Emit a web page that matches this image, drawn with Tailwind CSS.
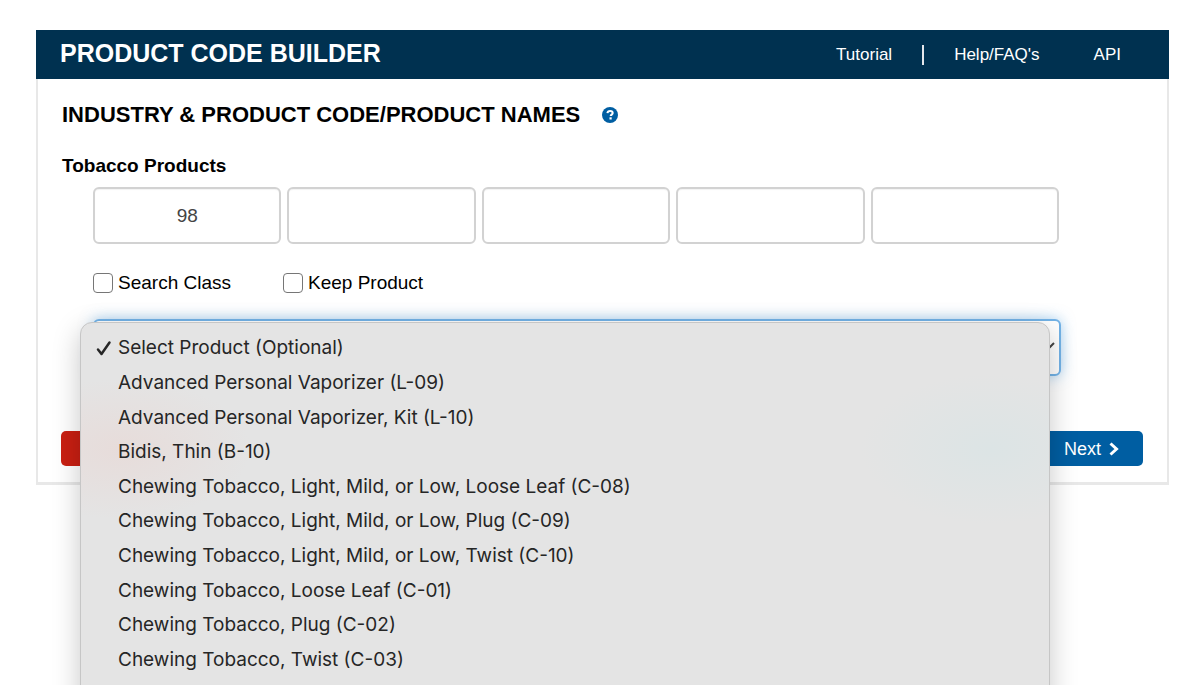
<!DOCTYPE html>
<html lang="en">

<head>
  <meta charset="UTF-8" />
  <meta name="viewport" content="width=device-width, initial-scale=1.0" />
  <title>Product Code Builder</title>
  <script src="https://cdn.jsdelivr.net/npm/@tailwindcss/browser@4"></script>
</head>

<body class="h-screen overflow-hidden bg-white font-['Liberation_Sans',Arial,sans-serif] text-black">
  <div class="ml-9 mr-[31px] pt-[30px]">
    <!-- Header -->
    <header class="flex h-[49px] items-center justify-between bg-[#003150] pl-6 pr-12 text-white">
      <h1 class="pb-1 text-[25px] leading-8 font-bold">PRODUCT CODE BUILDER</h1>
      <nav class="flex items-center text-[17px] leading-6">
        <a href="#tutorial">Tutorial</a>
        <span class="mx-[30px] h-5 w-[2px] bg-gray-200"></span>
        <a href="#help">Help/FAQ's</a>
        <a href="#api" class="ml-[54px]">API</a>
      </nav>
    </header>

    <!-- Builder -->
    <main class="border-x-2 border-b-3 border-[#e8e8e8] px-6 pt-[22px] pb-4">
      <h2 class="flex items-center text-[22px] leading-7 font-bold">
        INDUSTRY &amp; PRODUCT CODE/PRODUCT NAMES
        <button type="button" aria-label="Help" class="ml-[22px]">
          <svg class="size-4" viewBox="0 0 16 16">
            <circle cx="8" cy="8" r="8" fill="#005ea2" />
            <path d="M5.400 6.200c.2-1.600 1.300-2.300 2.700-2.300 1.400 0 2.600.8 2.600 2.100 0 1.600-2 1.600-2 3.100" fill="none" stroke="#fff" stroke-width="2" />
            <rect x="7.500" y="10.300" width="2.200" height="2.200" fill="#fff" />
          </svg>
        </button>
      </h2>

      <form>
        <fieldset>
          <legend class="pt-[25px] text-[19px] leading-6 font-bold">Tobacco Products</legend>
          <div class="mt-[9px] grid grid-cols-5 gap-[6px] pl-[31px] pr-[84px]">
            <input type="text" aria-label="Industry" value="98" class="h-[57px] min-w-0 rounded-md border-2 border-[#d2d2d2] text-center text-[19px] text-[#444] inset-shadow-xs" />
            <input type="text" aria-label="Class" class="h-[57px] min-w-0 rounded-md border-2 border-[#d2d2d2] text-center text-[19px] text-[#444] inset-shadow-xs" />
            <input type="text" aria-label="Subclass" class="h-[57px] min-w-0 rounded-md border-2 border-[#d2d2d2] text-center text-[19px] text-[#444] inset-shadow-xs" />
            <input type="text" aria-label="PIC" class="h-[57px] min-w-0 rounded-md border-2 border-[#d2d2d2] text-center text-[19px] text-[#444] inset-shadow-xs" />
            <input type="text" aria-label="Product" class="h-[57px] min-w-0 rounded-md border-2 border-[#d2d2d2] text-center text-[19px] text-[#444] inset-shadow-xs" />
          </div>
        </fieldset>

        <div class="mt-[27px] flex gap-[52px] pl-[31px] text-[19px] leading-6">
          <label class="flex items-center gap-[5px]">
            <input type="checkbox" class="size-5 appearance-none rounded-[4px] border border-[#767676] bg-white" />
            Search Class
          </label>
          <label class="flex items-center gap-[5px]">
            <input type="checkbox" class="size-5 appearance-none rounded-[4px] border border-[#767676] bg-white" />
            Keep Product
          </label>
        </div>

        <!-- Product select, open -->
        <div class="relative mt-6 ml-[31px] mr-[82px]">
          <select aria-label="Product name" class="block h-[57px] w-full appearance-none rounded-md border-2 border-[#73b3e7] bg-white px-3 text-[19px] shadow-[0_0_14px_rgba(82,168,236,0.5)]">
            <option>Select Product (Optional)</option>
          </select>
          <svg class="absolute top-[22px] right-[6px] h-3 w-4" viewBox="0 0 16 12" fill="none" stroke="#444" stroke-width="2">
            <path d="M1 2l7 7 7-7" />
          </svg>
          <ul role="listbox" aria-label="Products" class="absolute top-[3px] right-[11px] -left-[13px] z-10 grid h-[412px] auto-rows-[1fr] rounded-xl border border-[#c6c6c6] bg-[#e4e4e4] bg-[radial-gradient(130px_70px_at_40px_126px,#e7dcda,transparent),radial-gradient(130px_75px_at_910px_126px,#dce4e5,transparent)] pt-2 pb-[21px] pl-[37px] font-[Inter,sans-serif] text-[19px] leading-6 text-[#262626] shadow-[0_8px_28px_rgba(0,0,0,0.22)]">
            <li role="option" aria-selected="true" class="relative flex items-center">
              <svg class="absolute -left-[22px] size-4" viewBox="0 0 16 16" fill="none" stroke="#262626" stroke-width="2.500" stroke-linecap="round" stroke-linejoin="round">
                <path d="M2 9.500l3.500 4.500L13.500 2.500" />
              </svg>
              Select Product (Optional)
            </li>
            <li role="option" class="flex items-center">Advanced Personal Vaporizer (L-09)</li>
            <li role="option" class="flex items-center">Advanced Personal Vaporizer, Kit (L-10)</li>
            <li role="option" class="flex items-center">Bidis, Thin (B-10)</li>
            <li role="option" class="flex items-center">Chewing Tobacco, Light, Mild, or Low, Loose Leaf (C-08)</li>
            <li role="option" class="flex items-center">Chewing Tobacco, Light, Mild, or Low, Plug (C-09)</li>
            <li role="option" class="flex items-center">Chewing Tobacco, Light, Mild, or Low, Twist (C-10)</li>
            <li role="option" class="flex items-center">Chewing Tobacco, Loose Leaf (C-01)</li>
            <li role="option" class="flex items-center">Chewing Tobacco, Plug (C-02)</li>
            <li role="option" class="flex items-center">Chewing Tobacco, Twist (C-03)</li>
            <li role="option" aria-hidden="true"></li>
          </ul>
        </div>

        <!-- Actions -->
        <div class="mt-[55px] flex justify-between">
          <button type="reset" aria-label="Start over" class="-ml-px h-[35px] w-32 rounded-[5px] bg-[#c91f12]"></button>
          <button type="submit" class="flex h-[35px] items-center gap-2 rounded-[5px] bg-[#005ea2] px-6 text-[18px] leading-6 text-white">
            Next
            <svg class="h-[14px] w-[10px]" viewBox="0 0 10 14" fill="none" stroke="#fff" stroke-width="3">
              <path d="M1.500 1.500L7.500 7l-6 5.500" />
            </svg>
          </button>
        </div>
      </form>
    </main>
  </div>
</body>

</html>
